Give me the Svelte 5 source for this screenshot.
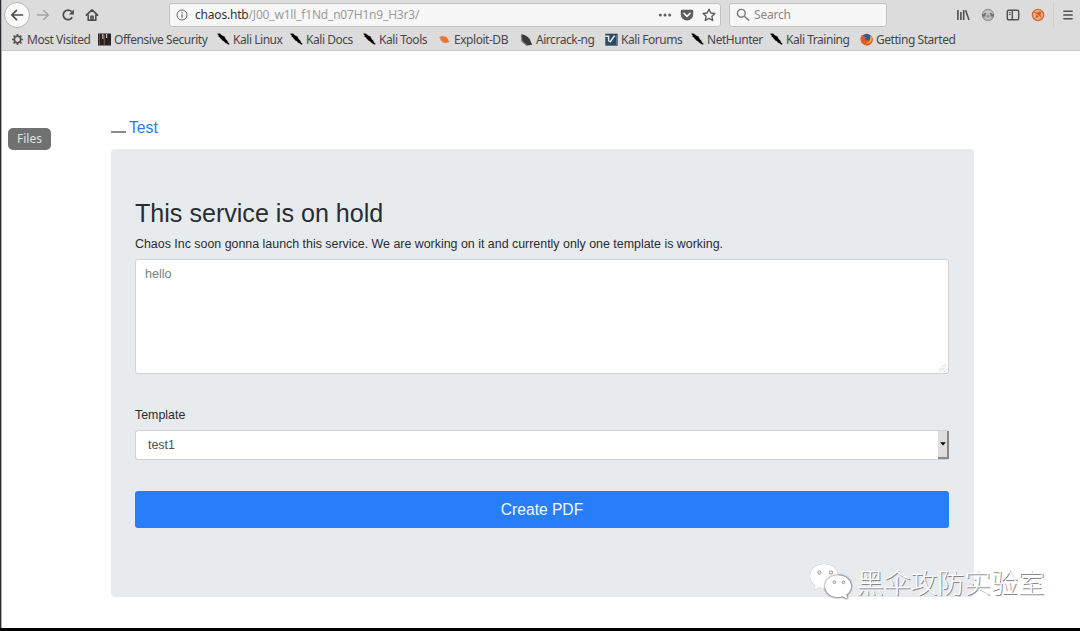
<script>
  const bookmarks = [
    { label: 'Most Visited', icon: 'gear' },
    { label: 'Offensive Security', icon: 'offsec' },
    { label: 'Kali Linux', icon: 'kali' },
    { label: 'Kali Docs', icon: 'kali' },
    { label: 'Kali Tools', icon: 'kali' },
    { label: 'Exploit-DB', icon: 'exploit' },
    { label: 'Aircrack-ng', icon: 'aircrack' },
    { label: 'Kali Forums', icon: 'forums' },
    { label: 'NetHunter', icon: 'kali' },
    { label: 'Kali Training', icon: 'kali' },
    { label: 'Getting Started', icon: 'firefox' }
  ];
</script>

<div class="screen">
  <header>
    <div class="navbar">
      <div class="back">
        <svg width="14" height="14" viewBox="0 0 14 14" fill="none" stroke="#4c4c4c" stroke-width="1.7" stroke-linecap="round" stroke-linejoin="round"><path d="M12.5 7H2M6.5 2.3 1.8 7l4.7 4.7" /></svg>
      </div>
      <svg class="forward" width="14" height="14" viewBox="0 0 14 14" fill="none" stroke="#a5a5a5" stroke-width="1.5" stroke-linecap="round" stroke-linejoin="round"><path d="M1.5 7H12M7.8 2.5 12.3 7l-4.5 4.5" /></svg>
      <svg class="reload" width="14" height="14" viewBox="0 0 14 14" fill="none" stroke="#4c4c4c" stroke-width="1.7"><path d="M11.2 9.3A4.8 4.8 0 1 1 10.6 3.6" /><path d="M12.9 1.5v5H7.9z" fill="#4c4c4c" stroke="none" /></svg>
      <svg class="home" width="14" height="14" viewBox="0 0 14 14" fill="none" stroke="#4c4c4c" stroke-width="1.6" stroke-linejoin="round" stroke-linecap="round"><path d="M1.3 7.2 7 1.8l5.7 5.4M3.2 7v5.3h7.6V7" /><path d="M6 12V8.2h2V12" /></svg>

      <div class="url">
        <svg width="12" height="12" viewBox="0 0 12 12" fill="none" stroke="#686868"><circle cx="6" cy="6" r="5" /><path d="M6 5.3v3.5M6 3v1.2" stroke-width="1.2" /></svg>
        <span class="address"><b>chaos.htb</b>/J00_w1ll_f1Nd_n07H1n9_H3r3/</span>
        <svg class="more" width="14" height="12" viewBox="0 0 14 12" fill="#606060"><circle cx="2.3" cy="6" r="1.5" /><circle cx="7" cy="6" r="1.5" /><circle cx="11.7" cy="6" r="1.5" /></svg>
        <svg class="pocket" width="14" height="12" viewBox="0 0 14 12"><path d="M2 .8h10q1.2 0 1.2 1.2v3.4a6.2 6.2 0 0 1-12.4 0V2Q.8.8 2 .8z" fill="#5c5c5c" /><path d="m4 4.4 3 2.9 3-2.9" fill="none" stroke="#f7f7f7" stroke-width="1.6" stroke-linecap="round" stroke-linejoin="round" /></svg>
        <svg class="star" width="14" height="14" viewBox="0 0 14 14" fill="none" stroke="#5c5c5c" stroke-width="1.4" stroke-linejoin="round"><path d="m7 1.2 1.8 3.8 4.1.5-3 2.8.8 4.2L7 10.4l-3.7 2.1.8-4.2-3-2.8 4.1-.5z" /></svg>
      </div>

      <div class="search">
        <svg width="14" height="14" viewBox="0 0 14 14" fill="none" stroke="#777" stroke-width="1.4" stroke-linecap="round"><circle cx="5.3" cy="5.3" r="3.9" /><path d="m8.3 8.3 4.4 4" /></svg>
        <span>Search</span>
      </div>

      <div class="tools">
        <svg width="14" height="14" viewBox="0 0 14 14" stroke="#505050" stroke-width="1.6" fill="none"><path d="M1.9 2v10M4.9 4v8M7.7 2v10M9.6 2.3l3.4 9.6" /></svg>
        <svg width="14" height="14" viewBox="0 0 14 14"><circle cx="7" cy="7" r="5.8" fill="#b0b0b0" stroke="#858585" stroke-width=".8" /><path d="M2.5 4.6Q7 .8 11.5 4.6z" fill="#ccc" /><path d="M1.2 6.2h11.6v2.4H1.2z" fill="#6e6e6e" /><circle cx="7" cy="8.2" r="2.3" fill="#999" stroke="#e0e0e0" stroke-width=".8" /><path d="M3 5.5h2M9 5.500h2" stroke="#777" /></svg>
        <svg width="14" height="14" viewBox="0 0 14 14" fill="none" stroke="#505050" stroke-width="1.4"><rect x="1.3" y="2.2" width="11.4" height="9.6" rx="1.4" /><path d="M6.3 2.2v9.6" /><path d="M2.8 4.7h2M2.8 6.6h2" stroke-width=".9" /></svg>
        <svg width="14" height="14" viewBox="0 0 14 14"><circle cx="7" cy="7" r="5.6" fill="#efaf87" stroke="#d2662f" stroke-width="1.3" /><path d="m2.6 3.6 2.9 1 2.7-1.200 2.500.4-1.200 2.100 1.200 4.400-2.700-1.500-3.800 1.800 1.200-3.200z" fill="#cf622f" /><path d="m4.300 5.300 5.300 4.200" stroke="#f2b48a" stroke-width=".9" /></svg>
        <i></i>
        <svg width="12" height="14" viewBox="0 0 12 14" stroke="#505050" stroke-width="1.5"><path d="M1.3 3.3h9.4M1.3 7h9.4M1.3 10.7h9.4" /></svg>
      </div>
    </div>

    <nav>
      {#each bookmarks as mark}
        <span class="mark">
          <svg width="13" height="13" viewBox="0 0 13 13">
            {#if mark.icon === 'gear'}
              <circle cx="6.5" cy="6.5" r="3.2" fill="none" stroke="#505050" stroke-width="1.6" />
              <path d="M6.5 1v2M6.5 10v2M1 6.5h2M10 6.5h2M2.6 2.6 4 4M9 9l1.4 1.4M2.6 10.4 4 9M9 4l1.4-1.4" stroke="#505050" stroke-width="1.7" />
            {:else if mark.icon === 'offsec'}
              <path d="M0 .5h13v12H0z" fill="#29201f" />
              <path d="M1.5 1v11M6.3 2v10" stroke="#6b504b" stroke-width="1.2" />
              <path d="M4.2 1h1.2v5H4.2zM8 1h1.2v4H8z" fill="#d0c4bf" />
            {:else if mark.icon === 'kali'}
              <path d="M.3.8 3 .7l2.2 2 2.1.7 1.2 2.5 1.7 1.8.5 1.5 1.8 1.9-1.1.5-2.1-1.5-1.3-.6-1-1.6-1.2-.1-1.5-1.7L3.6 5.5 3 4.2 1.5 3.6l.4-1z" fill="#000" stroke="#000" stroke-width=".3" />
            {:else if mark.icon === 'exploit'}
              <path d="m1 4.3 2-.7 1-.9 1.600.8 2.200-.1 1.400 1.500 1 1.200-.1 1.200 1.800 1.700-2.400.5-2 .7-1.300-.8-1.600.1-.7-1.400L2.200 7l.5-1.300z" fill="#e87536" />
            {:else if mark.icon === 'aircrack'}
              <path d="M1.3 1.2q5.1.6 8.2 4.5l2.7 6.1-5 .8-5-4.5z" fill="#393c3e" />
              <path d="m1.5 2.3.4 6 5 4.2" fill="none" stroke="#777" stroke-width="1.2" />
            {:else if mark.icon === 'forums'}
              <path d="M.3.7h12.4v12H.3z" fill="#2c4960" />
              <path d="M.3 3.2h3.3v4.5l1.7 1.1 3.8-5.5h1" fill="none" stroke="#e5e9ec" stroke-width="1.5" />
              <path d="M11.5 2v10" stroke="#567388" />
            {:else}
              <circle cx="6.7" cy="6.5" r="5.7" fill="#315b9b" />
              <path d="M2 1.8 4 3.6 6.8 4 5 5.6q1.2 2.8 4 1.6 2-1 1.2-4.6 4.3 3.4 1.6 7.3-3.3 4.2-8.1 1.7Q-.7 8.4.8 4.2z" fill="#e35b22" />
              <path d="M10.3 2.5q2.7 3.3.6 6.2-2 2.5-5 1.5 5.5-1.1 4.4-7.7z" fill="#f8bd38" />
            {/if}
          </svg>
          <span>{mark.label}</span>
        </span>
      {/each}
    </nav>
  </header>

  <main>
    <a class="title" href="#test"><u></u>Test</a>
    <section>
      <h1>This service is on hold</h1>
      <p>Chaos Inc soon gonna launch this service. We are working on it and currently only one template is working.</p>
      <div class="textarea">
        hello
        <svg width="9" height="9" viewBox="0 0 9 9" stroke="#aaa" stroke-width="1" stroke-dasharray="1 1"><path d="M0 8.5 8.5 0M3 8.5 8.5 3M6 8.5 8.5 6" /></svg>
      </div>
      <div class="label">Template</div>
      <div class="select"><span>test1</span><div class="drop"><svg width="6" height="4" viewBox="0 0 6 4"><path d="M.2.3h5.6L3 3.6z" /></svg></div></div>
      <button>Create PDF</button>
    </section>
  </main>

  <div class="edge"></div>
  <div class="tooltip">Files</div>
  <div class="watermark">
    <svg width="44" height="38" viewBox="0 0 44 38">
      <path fill="#fff" d="M15 1C7 1 1 6.3 1 13c0 4 2 7.2 5.3 9.5L4.8 27.200l5.400-2.700q2.300.6 4.800.6c8 0 14.300-5.400 14.300-12S23 1 15 1z" />
      <path class="bubble" fill="#fff" d="M29 12.300c-7.200 0-13 4.800-13 10.900s5.800 11 13 11q2.500 0 4.700-.8l5 2.500-1.300-4.200c3-2 4.800-5 4.800-8.500 0-6.100-5.900-10.900-13.200-10.900z" />
      <g fill="#eee" stroke="#888" stroke-width=".8"><circle cx="10.5" cy="9.5" r="1.7" /><circle cx="22" cy="9.5" r="1.7" /><circle cx="25.5" cy="19.300" r="1.400" /><circle cx="34.500" cy="19.300" r="1.400" /></g>
    </svg>
    <span>黑伞攻防实验室</span>
  </div>
</div>

<style>
  :global(body) { margin: 0; }
  .screen { position: relative; box-sizing: border-box; width: 1080px; height: 631px; overflow: hidden; background: #fff; border-bottom: 3px solid #000; font-family: "Liberation Sans", sans-serif; }
  svg { display: block; flex: none; }
  header { box-sizing: border-box; height: 51px; background: #dcdcdc; border-bottom: 1px solid #c9c9c9; font-family: "Noto Sans", sans-serif; color: #484848; }
  .navbar { display: flex; align-items: center; height: 30px; padding-left: 4px; }
  .back { box-sizing: border-box; width: 26px; height: 26px; border: 1px solid #b5b5b5; border-radius: 50%; background: #fafafa; display: grid; place-items: center; }
  .forward { margin-left: 6px; }
  .reload { margin-left: 11px; }
  .home { margin-left: 10px; }
  .url, .search { box-sizing: border-box; height: 24px; display: flex; align-items: center; background: #f7f7f7; border: 1px solid #c2c2c2; border-radius: 3px; font-size: 12px; line-height: 20px; letter-spacing: -.19px; }
  .url { width: 552px; margin-left: 70px; padding-left: 6px; }
  .address { margin-left: 7px; flex: 1; color: #9c9c9c; white-space: nowrap; }
  .address b { color: #333; font-weight: 400; }
  .more { margin-left: 1px; }
  .pocket { margin-left: 8px; }
  .star { margin: 0 4px 0 8px; }
  .search { width: 158px; margin-left: 8px; padding-left: 6px; color: #888; }
  .search span { margin-left: 4px; }
  .tools { display: flex; align-items: center; margin-left: 69px; gap: 11px; }
  .tools i { width: 1px; height: 26px; background: #cecece; margin-left: -3px; }
  .tools i + svg { margin-left: -3px; }
  nav { display: grid; grid-template-columns: 87px 119px 73px 73px 75px 82px 85px 86px 79px 90px 100px; padding-left: 11px; height: 19px; align-items: center; font-size: 12px; letter-spacing: -.46px; }
  .mark { display: flex; align-items: center; gap: 3px; white-space: nowrap; }
  main { padding: 66px 106px 0 111px; }
  .title { display: flex; height: 32px; line-height: 21px; font-size: 15.7px; color: #277de2; text-decoration: none; }
  .title u { width: 15px; height: 2px; margin: 14px 3px 0 0; background: #8c8c8c; }
  section { box-sizing: border-box; width: 863px; height: 448px; background: #e8ebee; border-radius: 4px; padding: 48px 25px 0 24px; color: #282d32; }
  h1 { margin: 0; font-size: 25.1px; line-height: 32px; font-weight: 400; }
  p { margin: 6px 0; font-size: 12.42px; line-height: 18px; white-space: nowrap; }
  .textarea { position: relative; box-sizing: border-box; height: 115px; padding: 6px 9px; background: #fff; border: 1px solid #cdd3d9; border-radius: 3px; font-size: 12.6px; line-height: 17px; color: #77808a; }
  .textarea svg { position: absolute; right: 1px; bottom: 1px; }
  .label { margin: 32px 0 6px; font-size: 12.4px; line-height: 18px; }
  .select { box-sizing: border-box; height: 30px; display: flex; justify-content: space-between; background: #fff; border: 1px solid #cdd3d9; border-right: 0; border-radius: 3px; color: #495057; font-size: 12.4px; line-height: 29px; padding-left: 12px; }
  .drop { box-sizing: border-box; width: 11px; height: 28px; background: #dedede; border-right: 2px solid #888; border-bottom: 2px solid #888; display: grid; place-items: center; }
  button { display: block; width: 100%; height: 37px; margin-top: 31px; padding: 0; border: 0; border-radius: 3px; background: #287ef8; color: #f5f9ff; font: 15.6px "Liberation Sans", sans-serif; }
  .edge { position: absolute; left: 0; top: 0; width: 1px; height: 631px; background: #2d2d38; border-right: 1px solid #aaa; }
  .tooltip { position: absolute; left: 8px; top: 128px; width: 43px; height: 22px; border-radius: 5px; background: #6e7170; color: #e0e0e0; font: 12px/22px "Noto Sans", sans-serif; text-align: center; }
  .watermark { position: absolute; left: 809px; top: 563px; display: flex; align-items: center; color: #fff; }
  .watermark svg { filter: drop-shadow(.5px .7px .6px #777); }
  .bubble { filter: drop-shadow(0 0 .8px #555); }
  .watermark span { margin-left: 4px; font: 300 26.8px/38px "Noto Sans CJK SC", sans-serif; text-shadow: 1px 1px .6px #888; white-space: nowrap; }
</style>
